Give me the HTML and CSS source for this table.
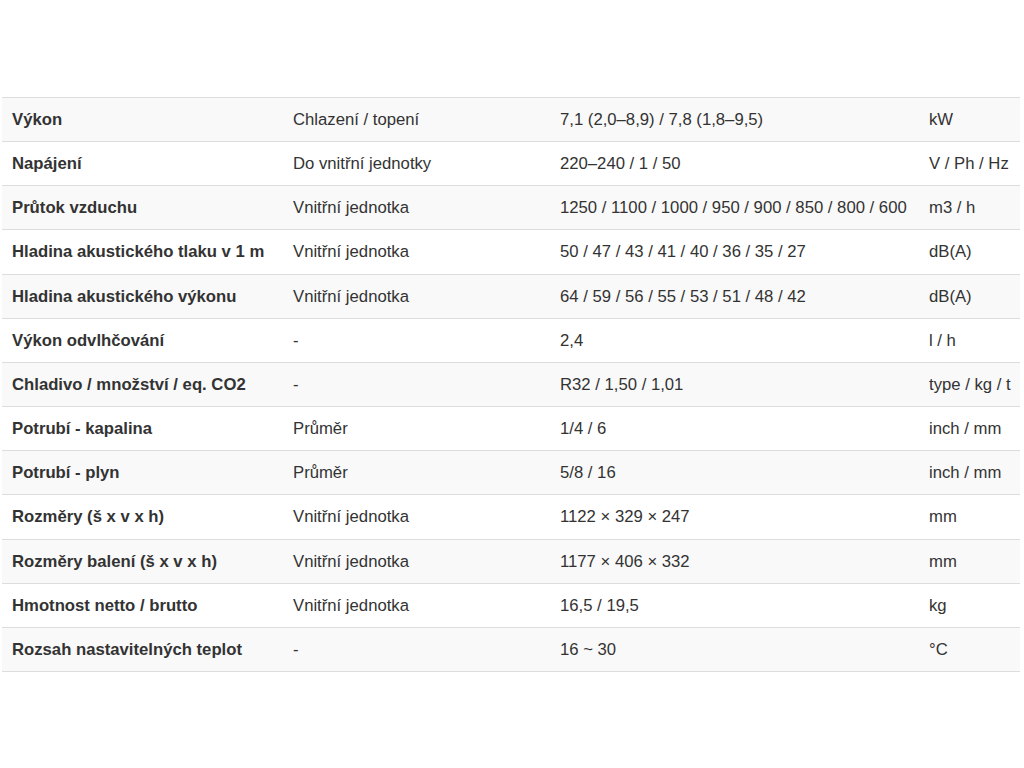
FILE: index.html
```html
<!DOCTYPE html>
<html lang="cs">
<head>
<meta charset="utf-8">
<title>Parametry</title>
<link rel="stylesheet" href="styles.css">
</head>
<body>
<div class="wrap">
<table class="spec">
<colgroup>
<col class="c1"><col class="c2"><col class="c3"><col class="c4">
</colgroup>
<tbody>
<tr><th>Výkon</th><td>Chlazení / topení</td><td>7,1 (2,0–8,9) / 7,8 (1,8–9,5)</td><td>kW</td></tr>
<tr><th>Napájení</th><td>Do vnitřní jednotky</td><td>220–240 / 1 / 50</td><td>V / Ph / Hz</td></tr>
<tr><th>Průtok vzduchu</th><td>Vnitřní jednotka</td><td>1250 / 1100 / 1000 / 950 / 900 / 850 / 800 / 600</td><td>m3 / h</td></tr>
<tr><th>Hladina akustického tlaku v 1 m</th><td>Vnitřní jednotka</td><td>50 / 47 / 43 / 41 / 40 / 36 / 35 / 27</td><td>dB(A)</td></tr>
<tr><th>Hladina akustického výkonu</th><td>Vnitřní jednotka</td><td>64 / 59 / 56 / 55 / 53 / 51 / 48 / 42</td><td>dB(A)</td></tr>
<tr><th>Výkon odvlhčování</th><td>-</td><td>2,4</td><td>l / h</td></tr>
<tr><th>Chladivo / množství / eq. CO2</th><td>-</td><td>R32 / 1,50 / 1,01</td><td>type / kg / t</td></tr>
<tr><th>Potrubí - kapalina</th><td>Průměr</td><td>1/4 / 6</td><td>inch / mm</td></tr>
<tr><th>Potrubí - plyn</th><td>Průměr</td><td>5/8 / 16</td><td>inch / mm</td></tr>
<tr><th>Rozměry (š x v x h)</th><td>Vnitřní jednotka</td><td>1122 × 329 × 247</td><td>mm</td></tr>
<tr><th>Rozměry balení (š x v x h)</th><td>Vnitřní jednotka</td><td>1177 × 406 × 332</td><td>mm</td></tr>
<tr><th>Hmotnost netto / brutto</th><td>Vnitřní jednotka</td><td>16,5 / 19,5</td><td>kg</td></tr>
<tr><th>Rozsah nastavitelných teplot</th><td>-</td><td>16 ~ 30</td><td>°C</td></tr>
</tbody>
</table>
</div>
</body>
</html>
```

FILE: styles.css
```css
html, body {
  margin: 0;
  padding: 0;
  background: #fff;
}
body {
  font-family: "Liberation Sans", Arial, Helvetica, sans-serif;
  font-size: 16.7px;
  color: #333;
}
.wrap {
  padding: 97px 4px 0 2px;
}
.spec {
  width: 1018px;
  border-collapse: collapse;
  border-spacing: 0;
  table-layout: fixed;
  border-bottom: 1px solid #ddd;
}
.c1 { width: 281px; }
.c2 { width: 267px; }
.c3 { width: 369px; }
.c4 { width: 101px; }
.spec th,
.spec td {
  padding: 10px;
  line-height: 23.15px;
  border-top: 1px solid #ddd;
  text-align: left;
  vertical-align: top;
  white-space: nowrap;
}
.spec th {
  font-weight: bold;
}
.spec td {
  font-weight: normal;
}
.spec tr:nth-child(odd) {
  background: #f9f9f9;
}
```
